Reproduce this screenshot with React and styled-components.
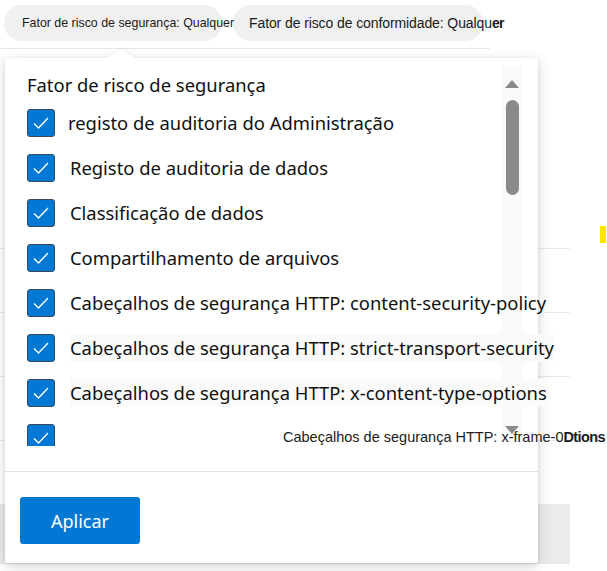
import styled, { createGlobalStyle } from "styled-components";

const GlobalStyle = createGlobalStyle`
  body {
    margin: 0;
    background: #ffffff;
    font-family: "Noto Sans", "Open Sans", sans-serif;
  }
`;

const Page = styled.div`
  position: relative;
  width: 607px;
  height: 571px;
  overflow: hidden;
`;

const FilterBar = styled.div`
  display: flex;
  align-items: flex-start;
  gap: 11px;
  width: 490px;
  height: 49px;
  padding: 5px 0 0 4px;
  box-sizing: border-box;
  border-bottom: 1px solid #e6e6e6;
`;

const Pill = styled.div`
  position: relative;
  z-index: ${p => p.layer};
  display: flex;
  align-items: center;
  height: 36px;
  width: ${p => p.width}px;
  padding-left: ${p => p.pad}px;
  box-sizing: border-box;
  border-radius: 18px;
  background: #f0f0f0;
  font-family: "Liberation Sans", Arial, sans-serif;
  font-size: ${p => p.size}px;
  letter-spacing: ${p => p.spacing || 0}px;
  color: #1b1b1b;
  white-space: nowrap;
`;

const Bold = styled.b`
  font-weight: 700;
  letter-spacing: -0.6px;
`;

const Table = styled.div`
  width: 570px;
  padding-top: 136px;
`;

const TableRow = styled.div`
  height: 63px;
  border-bottom: 1px solid #e8e8e8;
`;

const Band = styled.div`
  width: 570px;
  height: 60px;
  margin-top: -1px;
  background: #ebebeb;
`;

const Marker = styled.div`
  position: absolute;
  left: 600px;
  top: 226px;
  width: 6px;
  height: 17px;
  background: #ffe600;
`;

const Popover = styled.div`
  position: absolute;
  left: 5px;
  top: 58px;
  width: 533px;
  height: 505px;
  background: #ffffff;
  border-radius: 2px;
  box-shadow: 0 4px 16px rgba(0, 0, 0, 0.14), 0 1px 4px rgba(0, 0, 0, 0.1);
  display: flex;
  flex-direction: column;

  &::before {
    content: "";
    position: absolute;
    left: 100px;
    top: -9px;
    width: 0;
    height: 0;
    border-left: 16px solid transparent;
    border-right: 16px solid transparent;
    border-bottom: 10px solid #ffffff;
    filter: drop-shadow(0 -1px 1px rgba(0, 0, 0, 0.06));
  }
`;

const Body = styled.div`
  display: flex;
  height: 414px;
  border-bottom: 1px solid #e1e1e1;
  box-sizing: border-box;
`;

const ListArea = styled.div`
  position: relative;
  z-index: 1;
  flex: 1;
  min-width: 0;
  padding: 12px 0 0 22px;
  display: flex;
  flex-direction: column;
`;

const Heading = styled.div`
  font-size: 18.4px;
  color: #111;
  height: 29px;
  line-height: 29px;
  margin-bottom: 9px;
  white-space: nowrap;
`;

const List = styled.div`
  display: flex;
  flex-direction: column;
  align-items: flex-start;
  gap: 15px;
`;

const Item = styled.label`
  display: flex;
  align-items: ${p => (p.cut ? "flex-start" : "center")};
  height: ${p => (p.cut ? 23 : 30)}px;
  padding-top: ${p => (p.cut ? 1 : 0)}px;
  box-sizing: border-box;
  overflow: ${p => (p.cut ? "hidden" : "visible")};
  flex-shrink: 0;
  white-space: nowrap;
  font-size: 18.4px;
  color: #111;
`;

const Label = styled.span`
  background: ${p => (p.shaded ? "#fafafa" : "transparent")};
  line-height: 28px;
`;

const Box = styled.span`
  width: 28px;
  height: 28px;
  box-sizing: border-box;
  border-radius: 3px;
  background: #0078d4;
  border: 1px solid #3b4a5a;
  display: flex;
  align-items: center;
  justify-content: center;
  margin-right: ${p => p.gap}px;
  flex-shrink: 0;
`;

const Scrollbar = styled.div`
  width: 22px;
  margin: 7px 15px 0 0;
  height: 380px;
  background: #fafafa;
  display: flex;
  flex-direction: column;
  align-items: center;
  flex-shrink: 0;
`;

const Arrow = styled.div`
  width: 0;
  height: 0;
  border-left: 7px solid transparent;
  border-right: 7px solid transparent;
  ${p => p.down
    ? "border-top: 8px solid #8a8a8a; margin-top: auto; margin-bottom: 11px;"
    : "border-bottom: 8px solid #8a8a8a; margin-top: 15px;"}
`;

const Thumb = styled.div`
  width: 13px;
  height: 95px;
  margin-top: 12px;
  border-radius: 7px;
  background: #8a8a8a;
`;

const Footer = styled.div`
  padding: 25px 0 0 15px;
`;

const ApplyButton = styled.button`
  width: 120px;
  height: 47px;
  border: none;
  border-radius: 3px;
  background: #0078d4;
  color: #ffffff;
  font-family: "Noto Sans", "Open Sans", sans-serif;
  font-size: 18px;
`;

const StrayText = styled.div`
  position: absolute;
  left: 283px;
  top: 429px;
  font-family: "Liberation Sans", Arial, sans-serif;
  font-size: 14.5px;
  color: #1b1b1b;
  white-space: nowrap;
`;

function Check() {
  return (
    <svg width="18" height="14" viewBox="0 0 18 14" fill="none">
      <path d="M2 7.5 L6.5 12 L16 2" stroke="#fff" strokeWidth="1.4" />
    </svg>
  );
}

const items = [
  { label: "registo de auditoria do Administração", gap: 13 },
  { label: "Registo de auditoria de dados", gap: 15 },
  { label: "Classificação de dados", gap: 15 },
  { label: "Compartilhamento de arquivos", gap: 15 },
  { label: "Cabeçalhos de segurança HTTP: content-security-policy", gap: 15 },
  { label: "Cabeçalhos de segurança HTTP: strict-transport-security", gap: 15, shaded: true },
  { label: "Cabeçalhos de segurança HTTP: x-content-type-options", gap: 15, shaded: true },
  { label: "", gap: 15, cut: true },
];

export default function App() {
  return (
    <Page>
      <GlobalStyle />
      <FilterBar>
        <Pill width={218} pad={18} size={12.4} layer={2}>Fator de risco de segurança: Qualquer</Pill>
        <Pill width={250} pad={16} size={14} spacing={-0.1} layer={1}>
          Fator de risco de conformidade: Qualqu<Bold>er</Bold>
        </Pill>
      </FilterBar>
      <Table>
        <TableRow />
        <TableRow />
        <TableRow />
        <TableRow />
        <TableRow />
        <Band />
      </Table>
      <Marker />
      <Popover>
        <Body>
          <ListArea>
            <Heading>Fator de risco de segurança</Heading>
            <List>
              {items.map((it, i) => (
                <Item key={i} cut={it.cut}>
                  <Box gap={it.gap}><Check /></Box>
                  <Label shaded={it.shaded}>{it.label}</Label>
                </Item>
              ))}
            </List>
          </ListArea>
          <Scrollbar>
            <Arrow />
            <Thumb />
            <Arrow down />
          </Scrollbar>
        </Body>
        <Footer>
          <ApplyButton>Aplicar</ApplyButton>
        </Footer>
      </Popover>
      <StrayText>
        Cabeçalhos de segurança HTTP: x-frame-0<Bold>Dtions</Bold>
      </StrayText>
    </Page>
  );
}
